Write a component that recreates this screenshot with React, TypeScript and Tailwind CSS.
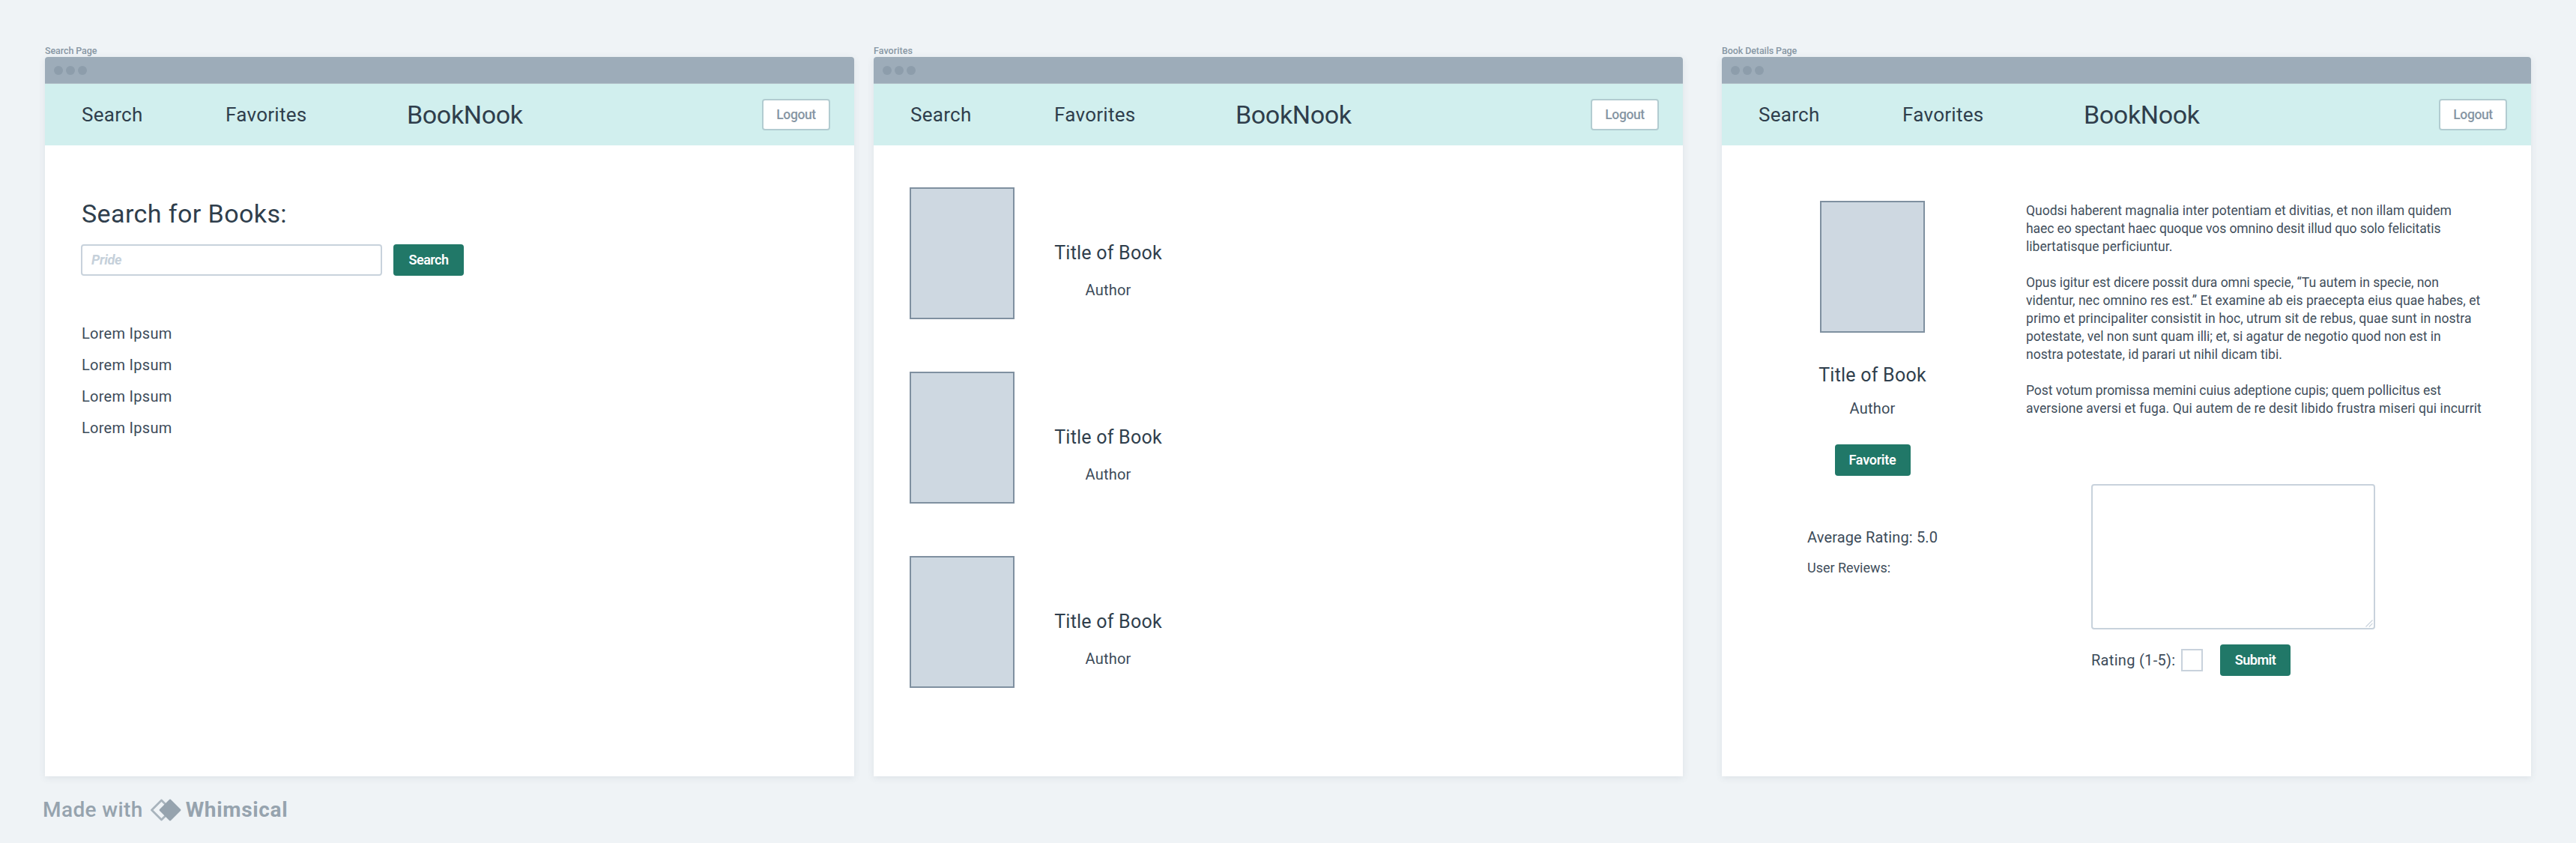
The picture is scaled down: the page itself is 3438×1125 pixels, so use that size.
import React from "react";
import clsx from "clsx";

const DOTS = [0, 1, 2];
const RESULTS = [0, 1, 2, 3];
const FAVORITES = [0, 1, 2];

const DESCRIPTION: { text: string; tracking: string }[] = [
  { text: "Quodsi haberent magnalia inter potentiam et divitias, et non illam quidem", tracking: "tracking-[0.01px]" },
  { text: "haec eo spectant haec quoque vos omnino desit illud quo solo felicitatis", tracking: "tracking-[-0.085px]" },
  { text: "libertatisque perficiuntur.", tracking: "tracking-[0.03px]" },
  { text: "", tracking: "" },
  { text: "Opus igitur est dicere possit dura omni specie, “Tu autem in specie, non", tracking: "tracking-[-0.02px]" },
  { text: "videntur, nec omnino res est.” Et examine ab eis praecepta eius quae habes, et", tracking: "tracking-[0.03px]" },
  { text: "primo et principaliter consistit in hoc, utrum sit de rebus, quae sunt in nostra", tracking: "tracking-[0.07px]" },
  { text: "potestate, vel non sunt quam illi; et, si agatur de negotio quod non est in", tracking: "tracking-[-0.02px]" },
  { text: "nostra potestate, id parari ut nihil dicam tibi.", tracking: "tracking-[0.03px]" },
  { text: "", tracking: "" },
  { text: "Post votum promissa memini cuius adeptione cupis; quem pollicitus est", tracking: "tracking-[-0.06px]" },
  { text: "aversione aversi et fuga. Qui autem de re desit libido frustra miseri qui incurrit", tracking: "tracking-[0.085px]" },
];

function NavBar() {
  return (
    <nav className="flex h-[82px] shrink-0 items-center bg-[#d1efee] pr-[32px] pl-[49px] text-[26px] leading-8 tracking-[0.28px]">
      <span className="w-48 shrink-0">Search</span>
      <span className="w-[242px] shrink-0">Favorites</span>
      <span className="text-[34px] leading-10 tracking-[-0.35px]">BookNook</span>
      <button className="ml-auto flex h-[42px] w-[91px] items-center justify-center rounded-[4px] border-2 border-[#b2ccd1] bg-white text-[17.5px] leading-6 font-medium tracking-[-0.4px] text-[#8595a3]">
        Logout
      </button>
    </nav>
  );
}

function BrowserWindow({
  name,
  nameTracking,
  className,
  children,
}: {
  name: string;
  nameTracking: string;
  className?: string;
  children: React.ReactNode;
}) {
  return (
    <section className={clsx("flex w-[1080px] shrink-0 flex-col", className)}>
      <h2 className={clsx("h-4 text-[12.5px] leading-4 font-medium text-[#8797a4]", nameTracking)}>{name}</h2>
      <div className="flex h-[960px] flex-col rounded-t-[4px] bg-white shadow-[0_2px_10px_rgba(60,80,100,0.10)]">
        <div className="flex h-9 shrink-0 items-center gap-1 rounded-t-[4px] border-b border-[#b4c3cb] bg-[#9dacb9] pl-3">
          {DOTS.map((dot) => (
            <span key={dot} className="size-3 rounded-full bg-[#8d9dab]" />
          ))}
        </div>
        <NavBar />
        {children}
      </div>
    </section>
  );
}

function PrimaryButton({ label, className }: { label: string; className: string }) {
  return (
    <button
      className={clsx(
        "flex h-[42px] shrink-0 items-center justify-center rounded-[4px] bg-[#217868] pb-px text-[18px] leading-6 font-semibold text-white",
        className,
      )}
    >
      {label}
    </button>
  );
}

function Cover() {
  return <div className="h-44 w-[140px] shrink-0 border-2 border-[#7f90a0] bg-[#ced8e1]" />;
}

function SearchPage() {
  return (
    <div className="flex flex-col pt-[71px] pl-12">
      <h1 className="pl-px text-[34px] leading-10 tracking-[0.41px]">Search for Books:</h1>
      <div className="mt-[21px] flex">
        <div className="flex h-[42px] w-[402px] items-center rounded-[4px] border-2 border-[#c8d2dc] bg-white pb-px pl-3 text-[18px] leading-6 font-bold tracking-[-0.26px] text-[#c5d0da] italic">
          Pride
        </div>
        <PrimaryButton label="Search" className="ml-[15px] w-[94px] tracking-[-0.5px]" />
      </div>
      <ul className="mt-14 pl-px text-[20px] leading-[42px] tracking-[0.28px] text-[#3c4b59]">
        {RESULTS.map((result) => (
          <li key={result}>Lorem Ipsum</li>
        ))}
      </ul>
    </div>
  );
}

function FavoritesPage() {
  return (
    <div className="flex flex-col gap-[70px] pt-14 pl-12">
      {FAVORITES.map((favorite) => (
        <article key={favorite} className="flex">
          <Cover />
          <div className="ml-[52px] flex w-[146px] flex-col items-center pt-[72px]">
            <h3 className="text-[25px] leading-8 tracking-[0.23px] whitespace-nowrap">Title of Book</h3>
            <p className="mt-[19px] text-[20px] leading-7 tracking-[0.21px] text-[#3c4b59]">Author</p>
          </div>
        </article>
      ))}
    </div>
  );
}

function BookDetailsPage() {
  return (
    <div className="flex">
      <div className="ml-[114px] flex w-[174px] shrink-0 flex-col items-center pt-[74px]">
        <Cover />
        <h3 className="mt-[41px] text-[25px] leading-8 tracking-[0.23px] whitespace-nowrap">Title of Book</h3>
        <p className="mt-[14px] text-[20px] leading-7 tracking-[0.21px] text-[#3c4b59]">Author</p>
        <PrimaryButton label="Favorite" className="mt-[34px] w-[101px] tracking-[-0.27px]" />
        <p className="mt-[68px] self-start text-[20px] leading-7 tracking-[0.15px] whitespace-nowrap text-[#3c4b59]">
          Average Rating: 5.0
        </p>
        <p className="mt-[15px] self-start text-[18px] leading-6 tracking-[-0.03px] whitespace-nowrap text-[#3f4e5b]">
          User Reviews:
        </p>
      </div>
      <div className="ml-[118px] flex flex-col pt-[75px]">
        <div className="text-[17.5px] leading-6 text-[#3f4e5b]">
          {DESCRIPTION.map((line, index) => (
            <p key={index} className={clsx("h-6 whitespace-nowrap", line.tracking)}>
              {line.text}
            </p>
          ))}
        </div>
        <div className="mt-[89px] ml-[87px] flex h-[194px] w-[379px] items-end justify-end rounded-[4px] border-2 border-[#c8d2dc] bg-white p-px">
          <svg className="size-[10px]" viewBox="0 0 10 10" fill="none" stroke="#c8d2dc" strokeWidth="1.1">
            <path d="M0.5 9.5 9.5 0.5M4.8 9.5 9.5 4.8" />
          </svg>
        </div>
        <div className="mt-5 ml-[87px] flex items-center">
          <span className="w-[120px] text-[20px] leading-7 tracking-[0.3px] whitespace-nowrap text-[#3c4b59]">
            Rating (1-5):
          </span>
          <span className="h-[30px] w-[29px] border-2 border-[#c8d2dc] bg-white" />
          <PrimaryButton label="Submit" className="ml-[23px] w-[94px] tracking-[-0.49px]" />
        </div>
      </div>
    </div>
  );
}

function WhimsicalMark() {
  return (
    <svg className="mr-[10px] ml-[10px] h-[30px] w-[41px]" viewBox="0 0 41 30" strokeLinejoin="round">
      <path d="M14.5 2 27.5 15 14.5 28 1.5 15Z" fill="none" stroke="#a9b4bd" strokeWidth="2.8" />
      <path d="M26 2 39 15 26 28 13 15Z" fill="#96a3ae" stroke="#96a3ae" strokeWidth="2.8" />
    </svg>
  );
}

export default function App() {
  return (
    <main className="h-[1125px] w-[3438px] overflow-hidden bg-[#eff3f6] pt-[60px] font-['Roboto',sans-serif] text-[#2f3e4c]">
      <div className="flex pl-[60px]">
        <BrowserWindow name="Search Page" nameTracking="tracking-[-0.09px]">
          <SearchPage />
        </BrowserWindow>
        <BrowserWindow name="Favorites" nameTracking="tracking-[0.05px]" className="ml-[26px]">
          <FavoritesPage />
        </BrowserWindow>
        <BrowserWindow name="Book Details Page" nameTracking="tracking-[-0.1px]" className="ml-[52px]">
          <BookDetailsPage />
        </BrowserWindow>
      </div>
      <footer className="mt-[27px] flex items-center pl-[57px] text-[28px] leading-9 text-[#96a3ae]">
        <span className="font-medium tracking-[0.4px]">Made with</span>
        <WhimsicalMark />
        <span className="-ml-[4px] font-bold tracking-[0.65px]">Whimsical</span>
      </footer>
    </main>
  );
}
